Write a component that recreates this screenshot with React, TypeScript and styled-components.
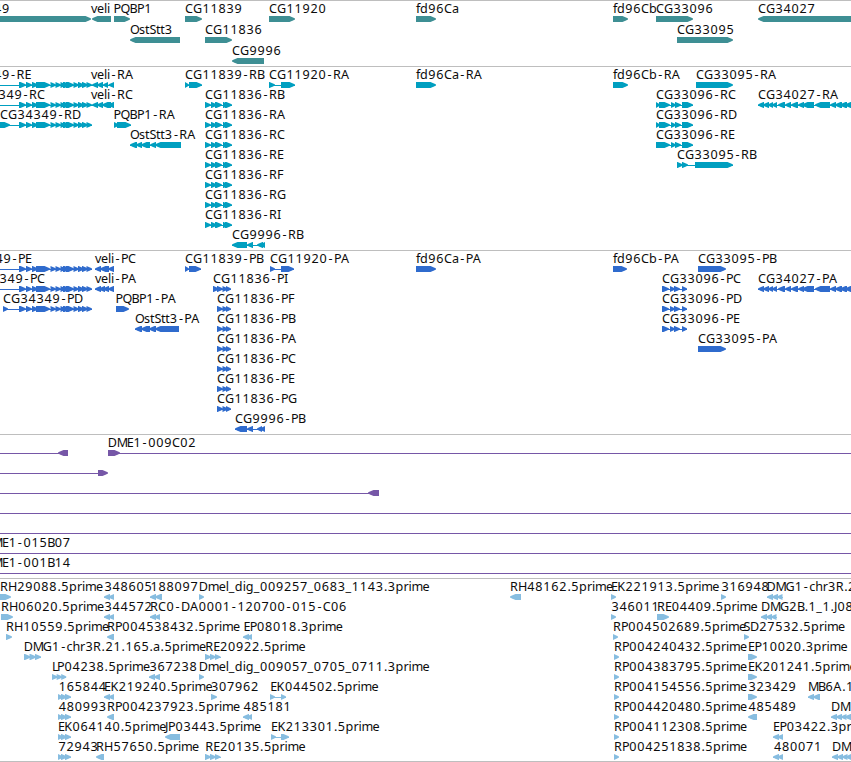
import React from "react";
import styled, { createGlobalStyle } from "styled-components";

const GlobalStyle = createGlobalStyle`
  body { margin: 0; background: #fff; }
`;

const Browser = styled.main`
  width: 851px;
  height: 762px;
  overflow: hidden;
  display: flex;
  flex-direction: column;
  background: #fff;
`;

const TrackPanel = styled.section<{ $color: string; $gap: number }>`
  display: flex;
  flex-direction: column;
  border-top: 1px solid #bebebe;
  padding-bottom: ${(p) => p.$gap}px;
  color: ${(p) => p.$color};
  &:last-child {
    border-bottom: 1px solid #bebebe;
  }
`;

const Lane = styled.svg<{ $height: number }>`
  display: block;
  flex: none;
  width: 851px;
  height: ${(p) => p.$height}px;
  overflow: visible;
`;

const Label = styled.text`
  font-family: "Noto Sans", "Open Sans", sans-serif;
  font-size: 12.6px;
  fill: #0c0c0c;
  white-space: pre;
`;

const Shape = styled.polygon`
  fill: currentColor;
`;

const Connector = styled.rect`
  fill: currentColor;
  shape-rendering: crispEdges;
`;

type Span = [number, number];
type Feature = {
  label?: string;
  x?: number;
  dir?: "l" | "r";
  parts?: Span[];
  line?: Span;
};

const ADVANCE: Record<string, number> = {
  A: 8.5, B: 7.3, C: 8, D: 9, E: 6.3, F: 6, G: 9, H: 9, I: 3, J: 3, K: 8, L: 5,
  M: 10, O: 9, P: 7, Q: 9, R: 8, S: 6.5, a: 7, b: 8, c: 6, d: 8, e: 7, f: 4,
  g: 8, h: 7.5, i: 3, l: 3, m: 11, p: 8, r: 5, s: 6, t: 4.3, v: 6, "-": 6.8,
  ".": 4, _: 5.9,
};

function glyphPositions(text: string, start: number) {
  let x = start + 0.1;
  return [...text]
    .map((c) => {
      const shift = c === "-" ? 1.4 : c === "." ? 0.5 : /\d/.test(c) ? 0.3 : 0;
      const at = x + shift;
      x += ADVANCE[c] ?? 8;
      return at.toFixed(1);
    })
    .join(" ");
}

function arrow([a, b]: Span, dir: "l" | "r") {
  const head = Math.min(5.5, b - a);
  const mid = head * 0.36;
  return dir === "r"
    ? `${a},15 ${b - head},15 ${b - mid},16.5 ${b},17.6 ${b},18.4 ${b - mid},19.5 ${b - head},21 ${a},21`
    : `${b},15 ${a + head},15 ${a + mid},16.5 ${a},17.6 ${a},18.4 ${a + mid},19.5 ${a + head},21 ${b},21`;
}

function FeatureGlyph({ f }: { f: Feature }) {
  const parts = f.parts ?? [];
  const dir = f.dir ?? "r";
  const line: Span | undefined =
    f.line ?? (parts.length > 1 ? [parts[0][0], parts[parts.length - 1][1]] : undefined);
  return (
    <g>
      {line && <Connector x={line[0]} y={18} width={line[1] - line[0]} height={1} />}
      {parts.map((p, i) => (
        <Shape key={i} points={arrow(p, dir)} />
      ))}
      {f.label && (
        <Label x={glyphPositions(f.label, f.x ?? parts[0][0])} y={12}>
          {f.label}
        </Label>
      )}
    </g>
  );
}

const R = (label: string, parts: Span[], x?: number, line?: Span): Feature => ({ label, parts, x, line, dir: "r" });
const L = (label: string, parts: Span[], x?: number, line?: Span): Feature => ({ label, parts, x, line, dir: "l" });

const exons34349: Span[] = [
  [19, 26], [26, 32], [32, 38], [36, 50], [50.5, 56], [55.5, 61], [60.5, 66],
  [63, 70], [66, 74], [73.5, 79], [78, 84], [82, 88], [86.5, 92],
];
const exons34027: Span[] = [
  [758, 764], [763, 769], [768, 773], [772, 777], [778, 785], [785, 791],
  [791, 798], [798, 804], [802, 814], [815, 830], [830, 836], [835, 842],
  [840, 847], [845, 851],
];
const exons11836: Span[] = [[205, 211], [211, 217], [215, 222], [223, 229], [225, 232]];
const cds11836: Span[] = [[217, 223], [222.5, 228], [226, 231]];
const exons33096: Span[] = [[656, 660], [659, 670], [671, 676], [675, 681], [682, 693]];
const cds33096: Span[] = [[662, 669], [670, 675], [674, 680], [682, 687]];

const genes: Feature[][] = [
  [
    R("CG34349", [[-48, 91]], -47.5),
    L("veli", [[92, 111]], 91),
    R("PQBP1", [[114, 130]], 113.5),
    R("CG11839", [[185, 202]]),
    R("CG11920", [[269, 295]]),
    R("fd96Ca", [[416, 436]], 415.8),
    R("fd96Cb", [[613, 628]], 612.8),
    R("CG33096", [[656, 693]]),
    L("CG34027", [[758, 856]]),
  ],
  [L("OstStt3", [[130, 180]]), R("CG11836", [[205, 232]]), R("CG33095", [[677, 733]])],
  [L("CG9996", [[232, 264]])],
];

const transcripts: Feature[][] = [
  [
    R("CG34349-RE", exons34349, -47.5, [0, 92]),
    L("veli-RA", [[92, 98], [97, 103], [103, 108], [108.5, 114]], 91),
    R("CG11839-RB", [[185, 189], [189, 202]]),
    R("CG11920-RA", [[269, 275], [281, 295]]),
    R("fd96Ca-RA", [[416, 436]], 415.8),
    R("fd96Cb-RA", [[613, 628]], 612.8),
    R("CG33095-RA", [[696, 733]]),
  ],
  [
    R("CG34349-RC", exons34349, -35, [0, 92]),
    L("veli-RC", [[92, 98], [97, 103], [102, 111], [108, 114]], 91),
    R("CG11836-RB", exons11836),
    R("CG33096-RC", exons33096),
    L("CG34027-RA", exons34027),
  ],
  [
    R("CG34349-RD", [[-4, 10], ...exons34349], 0),
    R("PQBP1-RA", [[114, 119], [117, 131]], 113.5),
    R("CG11836-RA", exons11836),
    R("CG33096-RD", exons33096),
  ],
  [
    L("OstStt3-RA", [[130, 137], [136, 142], [141, 150], [150, 156], [155, 181]]),
    R("CG11836-RC", exons11836),
    R("CG33096-RE", [[656, 670], ...exons33096.slice(2)]),
  ],
  [R("CG11836-RE", exons11836), R("CG33095-RB", [[677, 683], [682, 688], [695, 733]])],
  [R("CG11836-RF", exons11836)],
  [R("CG11836-RG", exons11836)],
  [R("CG11836-RI", exons11836)],
  [L("CG9996-RB", [[232, 247], [247, 253], [257, 263], [260, 265]])],
];

const proteins: Feature[][] = [
  [
    R("CG34349-PE", exons34349, -46, [0, 92]),
    L("veli-PC", [[95, 101], [100, 109], [108, 114]]),
    R("CG11839-PB", [[185, 189], [189, 201]]),
    R("CG11920-PA", [[270, 275], [281, 294]]),
    R("fd96Ca-PA", [[416, 436]], 415.8),
    R("fd96Cb-PA", [[613, 627]], 612.8),
    R("CG33095-PB", [[698, 726]]),
  ],
  [
    R("CG34349-PC", exons34349, -34, [0, 92]),
    L("veli-PA", [[95, 101], [99, 105], [103, 109], [108, 114]]),
    R("CG11836-PI", [[213, 219], [217, 223], [222.5, 228], [226, 231]]),
    R("CG33096-PC", cds33096),
    L("CG34027-PA", exons34027),
  ],
  [
    R("CG34349-PD", [[3, 8], ...exons34349]),
    R("PQBP1-PA", [[116, 129]], 115.5),
    R("CG11836-PF", cds11836),
    R("CG33096-PD", cds33096),
  ],
  [
    L("OstStt3-PA", [[135, 142], [141, 150], [149, 156], [155, 179]]),
    R("CG11836-PB", cds11836),
    R("CG33096-PE", cds33096),
  ],
  [R("CG11836-PA", cds11836), R("CG33095-PA", [[698, 726]])],
  [R("CG11836-PC", cds11836)],
  [R("CG11836-PE", cds11836)],
  [R("CG11836-PG", cds11836)],
  [L("CG9996-PB", [[235, 247], [247, 253], [257, 262], [260, 265]])],
];

const clones: Feature[][] = [
  [{ dir: "l", parts: [[58, 68]], line: [0, 68] }, R("DME1-009C02", [[108, 120]], 107.7, [108, 851])],
  [{ dir: "r", parts: [[98, 108]], line: [0, 106] }],
  [{ dir: "l", parts: [[368, 379]], line: [0, 379] }],
  [{ line: [0, 851] }],
  [{ line: [0, 851] }],
  [{ label: "DME1-015B07", x: -17, line: [0, 851] }],
  [{ label: "DME1-001B14", x: -17, line: [0, 851] }],
];

const pair = (x: number): Span[] => [[x, x + 6], [x + 4.5, x + 10]];
const triple = (x: number, w = 5): Span[] => [[x, x + w + 1], [x + w, x + 2 * w + 1], [x + 2 * w, x + 3 * w + 0.5]];
const cluster: Span[] = [[58, 63], [61, 67], [65, 71]];
const rp = (label: string, x = 614) => R(label, [[x, x + 5]], x - 0.2);

const reads: Feature[][] = [
  [
    R("RH29088.5prime", [[-2, 11]], -0.2),
    L("348605", pair(104)),
    L("188097", [[150, 156], [155, 162]]),
    R("Dmel_dig_009257_0683_1143.3prime", [[199, 204]], 198.7),
    L("RH48162.5prime", [[510, 521]], 509.8),
    R("EK221913.5prime", [[611, 616]], 610.8),
    R("316948", [[721, 726]]),
    L("DMG1-chr3R.2", triple(767), 766.3),
  ],
  [
    R("RH06020.5prime", [[1, 13]], 0.8),
    L("344572", pair(104)),
    L("RC0-DA0001-120700-015-C06", pair(150), 150),
    R("346011", [[611, 616]]),
    R("RE04409.5prime", [[657, 669]], 657),
    L("DMG2B.1_1.J08", triple(761), 760.8),
  ],
  [
    R("RH10559.5prime", [[6, 12]], 5.8),
    L("RP004538432.5prime", [[107, 114]], 106.8),
    L("EP08018.3prime", [[243, 249], [247, 252]], 243.3),
    rp("RP004502689.5prime", 613),
    R("SD27532.5prime", [[744, 749]], 743.3),
  ],
  [
    R("DMG1-chr3R.21.165.a.5prime", triple(24, 5.5), 23.7),
    R("RE20922.5prime", triple(205), 205.2),
    rp("RP004240432.5prime"),
    R("EP10020.3prime", [[748, 757]], 748),
  ],
  [
    R("LP04238.5prime", triple(52, 4.6), 52),
    L("367238", [[149, 155], [154, 160]]),
    R("Dmel_dig_009057_0705_0711.3prime", [[199, 204]], 198.7),
    rp("RP004383795.5prime"),
    R("EK201241.5prime", [[748, 757]], 748),
  ],
  [
    R("165844", cluster, 58.3),
    L("EK219240.5prime", pair(104), 104),
    R("307962", [[211, 217]], 210.5),
    R("EK044502.5prime", [[270, 275], [281, 286]], 270.2),
    rp("RP004154556.5prime"),
    R("323429", [[748, 757]]),
    L("MB6A.1", [[808, 814], [813, 820]], 807.8),
  ],
  [
    R("480993", cluster, 58.3),
    L("RP004237923.5prime", [[107, 114]], 106.8),
    L("485181", [[243, 249], [247, 252]]),
    rp("RP004420480.5prime"),
    L("485489", [[748, 757]]),
    L("DM", [...triple(831), [845, 851]], 831),
  ],
  [
    R("EK064140.5prime", cluster, 57.8),
    L("JP03443.5prime", [[165, 180]], 165),
    R("EK213301.5prime", [[271, 276], [281, 289]], 271),
    rp("RP004112308.5prime"),
    L("EP03422.3prime", pair(773), 773),
  ],
  [
    R("72943", cluster, 58),
    L("RH57650.5prime", [[96, 104]], 96),
    R("RE20135.5prime", triple(205), 205.2),
    rp("RP004251838.5prime"),
    L("480071", pair(773), 773.5),
    L("DM", [...triple(832), [846, 851]], 832),
  ],
];

const tracks = [
  { name: "genes", color: "#3e8f94", lane: 21, gap: 2, rows: genes },
  { name: "transcripts", color: "#009fc0", lane: 20, gap: 3, rows: transcripts },
  { name: "proteins", color: "#2f6bcd", lane: 20, gap: 3, rows: proteins },
  { name: "clones", color: "#7657a7", lane: 20, gap: 3, rows: clones },
  { name: "reads", color: "#87bde0", lane: 20, gap: 2, rows: reads },
];

export default function App() {
  return (
    <>
      <GlobalStyle />
      <Browser>
        {tracks.map((t) => (
          <TrackPanel key={t.name} $color={t.color} $gap={t.gap}>
            {t.rows.map((row, i) => (
              <Lane key={i} $height={t.lane}>
                {row.map((f, j) => (
                  <FeatureGlyph key={j} f={f} />
                ))}
              </Lane>
            ))}
          </TrackPanel>
        ))}
      </Browser>
    </>
  );
}
